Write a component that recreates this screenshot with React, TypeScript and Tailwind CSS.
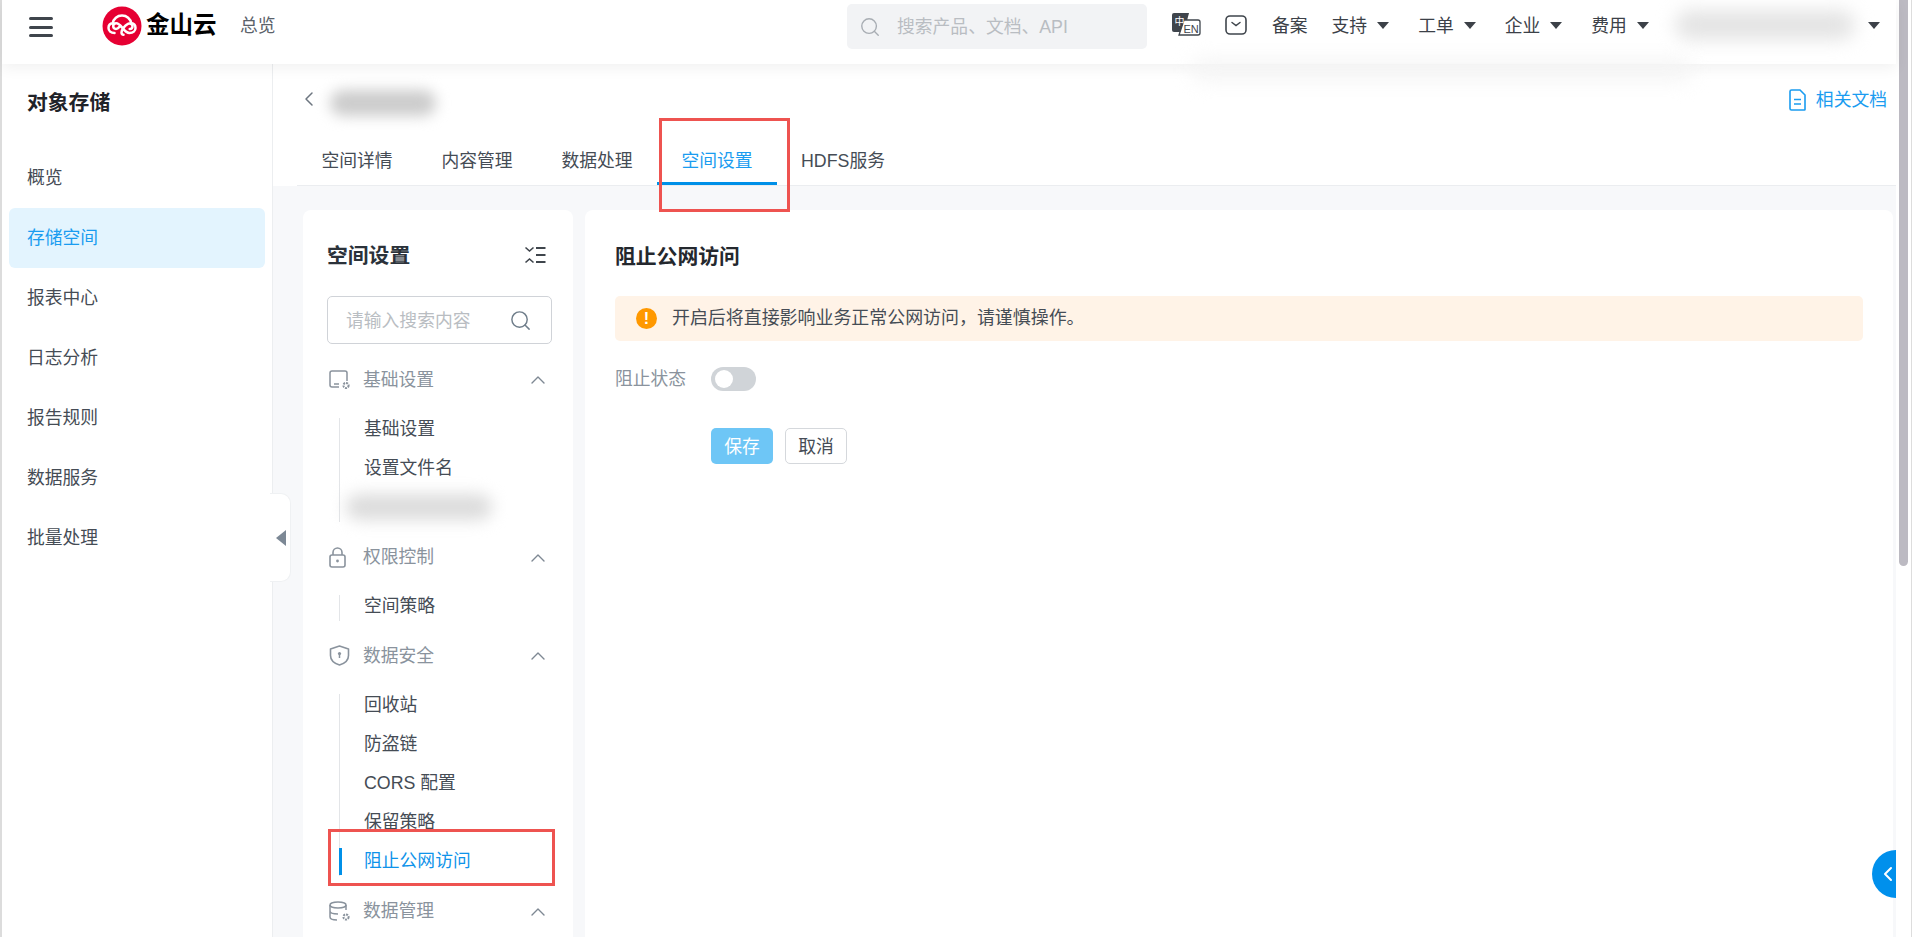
import React from "react";
import { ChevronLeft, ChevronUp, Search } from "lucide-react";

const sideItems = ["概览", "存储空间", "报表中心", "日志分析", "报告规则", "数据服务", "批量处理"];
const tabs = ["空间详情", "内容管理", "数据处理", "空间设置", "HDFS服务"];
const navItems = ["支持", "工单", "企业", "费用"];

const Caret = ({ className = "" }: { className?: string }) => (
  <svg width="12" height="7" viewBox="0 0 12 7" className={`shrink-0 ${className}`}>
    <path d="M0 0h12L6 7z" fill="#3c4148" />
  </svg>
);

const Logo = () => (
  <svg width="40" height="40" viewBox="0 0 40 40" className="shrink-0">
    <circle cx="20" cy="20" r="19.500" fill="#e60033" />
    <path
      d="M12.500 27c-3.600 0-6-2.200-6-5 0-2.600 1.900-4.500 4.300-4.900C11.500 12.800 15.200 9.500 20 9.500s8.500 3.300 9.200 7.600c2.400.4 4.300 2.300 4.300 4.900 0 2.800-2.400 5-6 5-3.400 0-5.200-2.700-7.500-5.600-2.300-2.800-4-4.100-5.800-4.100-1.800 0-3 1.200-3 2.800 0 1.600 1.200 2.800 2.800 2.800 1.300 0 2.300-.7 3.400-2"
      fill="none"
      stroke="#fff"
      strokeWidth="2.500"
      strokeLinecap="round"
    />
    <path
      d="M27.700 23.100c1.600 0 2.800-1.200 2.800-2.800 0-1.600-1.200-2.800-3-2.800-1.800 0-3.500 1.300-5.800 4.100-1.500 1.900-2.200 3.800-2.200 5 0 1.300.9 2.200 2 2.200"
      fill="none"
      stroke="#fff"
      strokeWidth="2.500"
      strokeLinecap="round"
    />
  </svg>
);

const LangIcon = () => (
  <svg width="30" height="24" viewBox="0 0 30 24" className="shrink-0">
    <path d="M3 0h15l-5 19H3a2 2 0 0 1-2-2V2a2 2 0 0 1 2-2z" fill="#3f454c" />
    <path d="M13 7h14a2 2 0 0 1 2 2v11a2 2 0 0 1-2 2H8z" fill="#fff" stroke="#3f454c" strokeWidth="1.300" />
    <text x="3.500" y="11.500" fontSize="10" fill="#fff" fontFamily="'Noto Sans CJK SC'">中</text>
    <text x="12.500" y="19.500" fontSize="11" fill="#3f454c" fontFamily="'Liberation Sans'">EN</text>
  </svg>
);

const MailIcon = () => (
  <svg width="22" height="20" viewBox="0 0 22 20" fill="none" className="shrink-0">
    <rect x="1" y="1" width="20" height="18" rx="4" stroke="#3f454c" strokeWidth="1.600" />
    <path d="M7 7.500l4 3 4-3" stroke="#3f454c" strokeWidth="1.500" strokeLinecap="round" />
  </svg>
);

const DocIcon = () => (
  <svg width="17" height="22" viewBox="0 0 17 22" fill="none" className="shrink-0">
    <path d="M1 2.500A1.500 1.500 0 0 1 2.500 1H11l5 5v14.500a.5.5 0 0 1-.5.5h-13A1.500 1.500 0 0 1 1 19.500z" stroke="#1a9cf0" strokeWidth="1.600" />
    <path d="M5 10.500h7M5 15h7" stroke="#1a9cf0" strokeWidth="1.600" />
  </svg>
);

const ListCollapseIcon = () => (
  <svg width="22" height="18" viewBox="0 0 22 18" fill="none" className="shrink-0">
    <path d="M1.500 1.500l4 3.500 4-3.500M1.500 16.500l4-3.500 4 3.500" stroke="#3f454c" strokeWidth="1.600" />
    <path d="M12 2h9.500M12 9h9.500M12 16h9.500" stroke="#3f454c" strokeWidth="1.800" />
  </svg>
);

const iconStroke = "#8a939d";

const BasicIcon = () => (
  <svg width="22" height="20" viewBox="0 0 22 20" fill="none">
    <path d="M10 17H3a2 2 0 0 1-2-2V3a2 2 0 0 1 2-2h13a2 2 0 0 1 2 2v8" stroke={iconStroke} strokeWidth="1.500" />
    <path d="M5 14h5" stroke={iconStroke} strokeWidth="1.500" />
    <circle cx="17" cy="15.500" r="2.600" stroke={iconStroke} strokeWidth="2" strokeDasharray="2 1" />
  </svg>
);

const LockIcon = () => (
  <svg width="18" height="21" viewBox="0 0 18 21" fill="none">
    <rect x="1" y="8" width="15" height="12" rx="2" stroke={iconStroke} strokeWidth="1.600" />
    <path d="M4 8V5.500a4.500 4.500 0 0 1 9 0V8" stroke={iconStroke} strokeWidth="1.600" />
    <circle cx="8.500" cy="14" r="1.400" fill={iconStroke} />
  </svg>
);

const ShieldIcon = () => (
  <svg width="21" height="21" viewBox="0 0 21 21" fill="none">
    <path d="M10.500 1l9 3v6.500c0 4.500-4 8-9 9.500-5-1.500-9-5-9-9.500V4z" stroke={iconStroke} strokeWidth="1.600" strokeLinejoin="round" />
    <circle cx="10.500" cy="8.500" r="1.600" fill={iconStroke} />
    <path d="M10.500 9v4" stroke={iconStroke} strokeWidth="1.500" />
  </svg>
);

const DataIcon = () => (
  <svg width="22" height="21" viewBox="0 0 22 21" fill="none">
    <ellipse cx="9" cy="4" rx="8" ry="3" stroke={iconStroke} strokeWidth="1.500" />
    <path d="M1 4v12c0 1.700 3 3 7 3M17 4v5M1 10c0 1.700 3 3 8 3" stroke={iconStroke} strokeWidth="1.500" />
    <circle cx="17" cy="16" r="2.600" stroke={iconStroke} strokeWidth="2" strokeDasharray="2 1" />
  </svg>
);

type GroupProps = {
  title: string;
  icon: React.ReactNode;
  items?: string[];
  className?: string;
  listClass?: string;
  activeItem?: string;
};

const SettingGroup = ({ title, icon, items = [], className = "", listClass = "mt-1", activeItem }: GroupProps) => (
  <div className={className}>
    <div className="flex h-12 items-center pr-[2px] text-[#8a939d]">
      <span className="ml-[2px] flex w-[34px] items-center">{icon}</span>
      <span className="flex-1">{title}</span>
      <ChevronUp size={24} strokeWidth={1.4} color="#7e8893" />
    </div>
    {items.length > 0 && (
      <div className={`relative ml-3 ${listClass}`}>
        <span className="absolute top-2 bottom-[5px] left-0 w-px bg-[#e3e5e8]" />
        {items.map((item) => (
          <div
            key={item}
            className={`relative flex h-[39.100px] items-center pl-[25px] ${item === activeItem ? "text-[#0e93ea]" : "text-[#454c55]"}`}
          >
            {item === activeItem && <span className="absolute left-0 h-[27px] w-[3px] bg-[#0090e8]" />}
            {item === "blur" ? <span className="-ml-[18px] h-[26px] w-[146px] rounded-full bg-[#dcdcdc] blur-[8px]" /> : item}
          </div>
        ))}
      </div>
    )}
  </div>
);

export default function App() {
  return (
    <div className="relative flex h-[937px] w-[1917px] overflow-hidden bg-white font-['Liberation_Sans','Noto_Sans_CJK_SC',sans-serif] text-[17.800px] whitespace-nowrap text-[#454c55]">
      <div className="w-[2px] shrink-0 bg-[#dcdcdc]" />
      <div className="flex w-[1894px] shrink-0 flex-col">
        {/* top bar */}
        <header className="relative z-20 flex h-16 shrink-0 items-center bg-white shadow-[0_4px_14px_rgba(0,0,0,0.06)]">
          <div className="ml-[27px] flex h-5 w-6 shrink-0 -translate-y-[5px] flex-col justify-between">
            <span className="h-[3px] rounded-sm bg-[#3f454c]" />
            <span className="h-[3px] rounded-sm bg-[#3f454c]" />
            <span className="h-[3px] rounded-sm bg-[#3f454c]" />
          </div>
          <div className="ml-[49px] flex -translate-y-[6px] items-center">
            <Logo />
          </div>
          <span className="ml-[4px] w-[70px] shrink-0 -translate-y-[6px] text-[23.500px] leading-none font-bold text-black">金山云</span>
          <span className="ml-[24px] -translate-y-[6px] text-[#5b626a]">总览</span>

          <div className="absolute top-[4px] left-[845px] flex h-[45px] w-[300px] items-center rounded-[5px] bg-[#f2f3f5] pl-3 text-[#b9bdc2]">
            <Search size={22} strokeWidth={1.5} color="#a8adb3" />
            <span className="ml-[16px] pt-[2px]">搜索产品、文档、API</span>
          </div>
          <div className="absolute top-[13px] left-[1169px] flex h-6 items-center">
            <LangIcon />
            <span className="ml-[24px]">
              <MailIcon />
            </span>
            <span className="ml-[25px] pt-[2px] text-[#3c4148]">备案</span>
            <div className="ml-[24px] flex items-center text-[#3c4148]">
              {navItems.map((item) => (
                <div key={item} className="mr-[29px] flex items-center gap-[10px]">
                  <span className="pt-[2px]">{item}</span>
                  <Caret />
                </div>
              ))}
            </div>
            <span className="-ml-[3px] h-[30px] w-[180px] rounded-full bg-[#e4e4e4] blur-[9px]" />
            <Caret className="ml-[13px]" />
          </div>
          <span className="absolute top-[60px] left-[1190px] h-5 w-[500px] rounded-full bg-[#f4f4f4] blur-[10px]" />
        </header>

        <div className="flex min-h-0 flex-1">
          {/* product menu */}
          <aside className="relative z-10 w-[271px] shrink-0 border-r border-[#eceef0] bg-white">
            <div className="flex h-[78px] items-center pl-[25px] text-[20.800px] font-semibold text-[#1f2329]">对象存储</div>
            <nav className="mt-[6px]">
              {sideItems.map((item) => (
                <div
                  key={item}
                  className={`mx-[7px] flex h-[60px] items-center rounded-md pl-[18px] ${item === "存储空间" ? "bg-[#e3f4fe] text-[#1a9cf0]" : ""}`}
                >
                  {item}
                </div>
              ))}
            </nav>
            <div className="absolute top-[429px] left-[268px] flex h-[89px] w-[21px] items-center rounded-r-[10px] border border-l-0 border-[#eff1f3] bg-white pl-[6px]">
              <svg width="10" height="16" viewBox="0 0 10 16">
                <path d="M10 0v16L0 8z" fill="#7c8895" />
              </svg>
            </div>
          </aside>

          <main className="flex min-w-0 flex-1 flex-col bg-[#f7f8fa]">
            <div className="h-[122px] shrink-0 bg-white pl-6">
              <div className="flex h-[70px] items-center justify-between pr-[9px]">
                <div className="flex items-center">
                  <ChevronLeft size={24} strokeWidth={1.5} color="#6d7680" />
                  <span className="ml-[9px] h-[26px] w-[106px] translate-y-[4px] rounded-full bg-[#cccccc] blur-[7px]" />
                </div>
                <div className="flex translate-y-[1px] items-center gap-[10px] text-[#1a9cf0]">
                  <DocIcon />
                  <span>相关文档</span>
                </div>
              </div>
              <div className="flex h-[52px] border-b border-[#ebedf0]">
                {tabs.map((tab) => (
                  <div
                    key={tab}
                    className={`flex items-center justify-center ${tab === "空间设置" ? "border-b-[3px] border-[#0090e8] pt-[6px] text-[#1a9cf0]" : "pt-[3px]"} ${tab === "HDFS服务" ? "w-auto pl-6" : "w-[120px]"}`}
                  >
                    {tab}
                  </div>
                ))}
              </div>
            </div>

            <div className="mt-6 flex min-h-0 flex-1 gap-3 overflow-hidden pr-[3px] pl-[30px]">
              <section className="w-[270px] shrink-0 rounded-t-lg bg-white pt-[25px] pr-[21px] pl-6">
                <div className="flex h-10 items-center justify-between pr-[6px]">
                  <span className="pt-[1px] text-[20.800px] font-semibold text-[#2b323a]">空间设置</span>
                  <ListCollapseIcon />
                </div>
                <div className="mt-[21px] flex h-12 items-center justify-between rounded-[5px] border border-[#d0d3d8] pr-[19px] pl-[18px] text-[#b9bdc2]">
                  <span className="pt-[3px]">请输入搜索内容</span>
                  <Search size={23} strokeWidth={1.5} color="#6f7d8a" />
                </div>
                <div className="mt-3">
                  <SettingGroup title="基础设置" icon={<BasicIcon />} items={["基础设置", "设置文件名", "blur"]} listClass="mt-[5.500px]" />
                  <SettingGroup title="权限控制" icon={<LockIcon />} items={["空间策略"]} className="mt-[7px]" listClass="mt-[5px]" />
                  <SettingGroup
                    title="数据安全"
                    icon={<ShieldIcon />}
                    items={["回收站", "防盗链", "CORS 配置", "保留策略", "阻止公网访问"]}
                    activeItem="阻止公网访问"
                    className="mt-[6px]"
                    listClass="mt-[5.900px]"
                  />
                  <SettingGroup title="数据管理" icon={<DataIcon />} className="mt-[6.500px]" />
                </div>
              </section>

              <section className="min-w-0 flex-1 rounded-t-lg bg-white pt-[27px] pr-[30px] pl-[30px]">
                <h2 className="flex h-10 items-center text-[20.800px] font-semibold text-[#24282e]">阻止公网访问</h2>
                <div className="mt-[19px] flex h-[45px] items-center rounded-[5px] bg-[#fff3e7] pl-[21px]">
                  <span className="flex h-[21px] w-[21px] items-center justify-center rounded-full bg-[#ff9800] text-[16px] leading-none font-bold text-white">!</span>
                  <span className="ml-[15px] text-[17.950px]">{"开启后将直接影响业务正常公网访问\uFF0C请谨慎操作。"}</span>
                </div>
                <div className="mt-[26px] flex h-6 items-center">
                  <span className="w-[96px] text-[#8a939d]">阻止状态</span>
                  <span className="flex h-6 w-[45px] items-center rounded-full bg-[#d0d4d8] pl-[4px]">
                    <span className="h-[18px] w-[18px] rounded-full bg-white" />
                  </span>
                </div>
                <div className="mt-[37px] ml-[96px] flex gap-3">
                  <span className="flex h-9 w-[62px] items-center justify-center rounded-[5px] bg-[#6ec6f6] pt-[3px] text-white">保存</span>
                  <span className="flex h-9 w-[62px] items-center justify-center rounded-[5px] border border-[#d5d8dc] bg-white pt-[3px]">取消</span>
                </div>
              </section>
            </div>
          </main>
        </div>
      </div>

      {/* page scrollbar */}
      <div className="w-[15px] shrink-0 px-[3px]">
        <div className="h-[566px] w-[9px] rounded-b-full bg-[#bcbac2]" />
      </div>
      <div className="w-px shrink-0 bg-[#dddddd]" />

      {/* red annotations from the screenshot */}
      <span className="absolute top-[118px] left-[659px] z-30 h-[94px] w-[131px] border-[3px] border-[#ee5350]" />
      <span className="absolute top-[829px] left-[328px] z-30 h-[57px] w-[227px] border-[3px] border-[#ee5350]" />

      {/* floating tab */}
      <div className="absolute top-[850px] left-[1872px] z-30 flex h-12 w-6 items-center justify-end overflow-hidden rounded-l-full bg-[#0090ec]">
        <ChevronLeft size={24} strokeWidth={2} color="#fff" className="-mr-[4px] shrink-0" />
      </div>
    </div>
  );
}
